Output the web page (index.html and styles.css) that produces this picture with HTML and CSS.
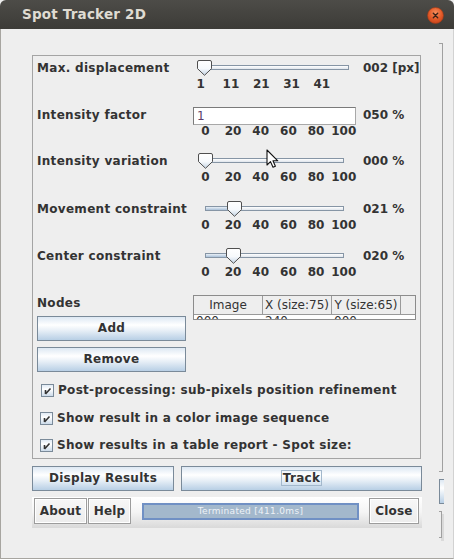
FILE: index.html
```html
<!DOCTYPE html>
<html>
<head>
<meta charset="utf-8">
<title>Spot Tracker 2D</title>
<link rel="stylesheet" href="styles.css">
</head>
<body>
<div class="window">
  <div class="titlebar">
    <span class="title">Spot Tracker 2D</span>
    <svg class="closebtn" width="17" height="17" viewBox="0 0 17 17">
      <defs>
        <radialGradient id="cg" cx="50%" cy="35%" r="65%">
          <stop offset="0" stop-color="#f7905f"/>
          <stop offset="0.6" stop-color="#e45a28"/>
          <stop offset="1" stop-color="#c8451c"/>
        </radialGradient>
      </defs>
      <circle cx="8.5" cy="8.5" r="8" fill="url(#cg)" stroke="#9c3a17" stroke-width="0.6"/>
      <path d="M6.3 6.3 L10.7 10.7 M10.7 6.3 L6.3 10.7" stroke="#3b2218" stroke-width="1.4" stroke-linecap="round"/>
    </svg>
  </div>
  <div class="client">
    <div class="main">
      <div class="panel">
        <div class="row">
          <div class="lbl">Max. displacement</div>
          <div class="ctrl">
            <div class="slider">
              <div class="track tr50"></div>
              <svg class="thumb" style="left:4px" width="15" height="16" viewBox="0 0 15 16"><use href="#thumbshape"/></svg>
            </div>
            <div class="ticks t50"><span>1</span><span>11</span><span>21</span><span>31</span><span>41</span></div>
          </div>
          <div class="val">002 [px]</div>
        </div>

        <div class="row r2">
          <div class="lbl">Intensity factor</div>
          <div class="ctrl">
            <div class="field">1</div>
            <div class="ticks t100 tf"><span>0</span><span>20</span><span>40</span><span>60</span><span>80</span><span>100</span></div>
          </div>
          <div class="val">050 %</div>
        </div>

        <div class="row r3">
          <div class="lbl">Intensity variation</div>
          <div class="ctrl">
            <div class="slider">
              <div class="track tr100"></div>
              <svg class="thumb" style="left:5px" width="15" height="16" viewBox="0 0 15 16"><use href="#thumbshape"/></svg>
            </div>
            <div class="ticks t100"><span>0</span><span>20</span><span>40</span><span>60</span><span>80</span><span>100</span></div>
          </div>
          <div class="val">000 %</div>
        </div>

        <div class="row r4">
          <div class="lbl">Movement constraint</div>
          <div class="ctrl">
            <div class="slider">
              <div class="track tr100"><div class="fill" style="width:30px"></div></div>
              <svg class="thumb" style="left:34px" width="15" height="16" viewBox="0 0 15 16"><use href="#thumbshape"/></svg>
            </div>
            <div class="ticks t100"><span>0</span><span>20</span><span>40</span><span>60</span><span>80</span><span>100</span></div>
          </div>
          <div class="val">021 %</div>
        </div>

        <div class="row r5">
          <div class="lbl">Center constraint</div>
          <div class="ctrl">
            <div class="slider">
              <div class="track tr100"><div class="fill" style="width:28px"></div></div>
              <svg class="thumb" style="left:33px" width="15" height="16" viewBox="0 0 15 16"><use href="#thumbshape"/></svg>
            </div>
            <div class="ticks t100"><span>0</span><span>20</span><span>40</span><span>60</span><span>80</span><span>100</span></div>
          </div>
          <div class="val">020 %</div>
        </div>

        <div class="nodes">
          <div class="nodes-left">
            <div class="lbl">Nodes</div>
            <div class="btn add">Add</div>
            <div class="btn remove">Remove</div>
          </div>
          <div class="table">
            <div class="thead">
              <span>Image</span><span>X (size:75)</span><span>Y (size:65)</span><span class="corner"></span>
            </div>
            <div class="trow">
              <span>000</span><span>240</span><span>000</span><span></span>
            </div>
          </div>
        </div>

        <div class="cb cb1">
          <svg class="box" width="13" height="13" viewBox="0 0 13 13"><use href="#cbshape"/></svg>
          <span>Post-processing: sub-pixels position refinement</span>
        </div>
        <div class="cb cb2">
          <svg class="box" width="13" height="13" viewBox="0 0 13 13"><use href="#cbshape"/></svg>
          <span>Show result in a color image sequence</span>
        </div>
        <div class="cb cb3">
          <svg class="box" width="13" height="13" viewBox="0 0 13 13"><use href="#cbshape"/></svg>
          <span>Show results in a table report - Spot size:</span>
        </div>
      </div>

      <div class="btnrow">
        <div class="btn display">Display Results</div>
        <div class="btn track-btn"><span class="focus">Track</span></div>
      </div>

      <div class="bottom">
        <div class="ebtn about">About</div>
        <div class="ebtn help">Help</div>
        <div class="progress">Terminated [411.0ms]</div>
        <div class="ebtn close">Close</div>
      </div>
    </div>
    <div class="side">
      <div class="brk1"></div>
      <div class="piece"></div>
      <div class="brk2"></div>
    </div>
  </div>

  <svg class="cursor" width="13" height="20" viewBox="0 0 13 20">
    <path d="M1 1 L1 16 L4.5 12.6 L7 18.3 L9.4 17.3 L7 11.8 L11.8 11.8 Z" fill="#ffffff" stroke="#111111" stroke-width="1.1" stroke-linejoin="round"/>
  </svg>

  <svg width="0" height="0" class="defs">
    <defs>
      <linearGradient id="tg" x1="0" y1="0" x2="0" y2="1">
        <stop offset="0" stop-color="#ffffff"/>
        <stop offset="0.55" stop-color="#f6f9fc"/>
        <stop offset="1" stop-color="#c4d4e4"/>
      </linearGradient>
      <g id="thumbshape">
        <path d="M2 0.5 H13 Q14.5 0.5 14.5 2 V8.6 L7.5 15.3 L0.5 8.6 V2 Q0.5 0.5 2 0.5 Z" fill="url(#tg)" stroke="#4f4f4f" stroke-width="1"/>
      </g>
      <linearGradient id="bg" x1="0" y1="0" x2="0" y2="1">
        <stop offset="0" stop-color="#dde8f3"/>
        <stop offset="0.4" stop-color="#ffffff"/>
        <stop offset="1" stop-color="#c8d8e8"/>
      </linearGradient>
      <g id="cbshape">
        <rect x="0.5" y="0.5" width="12" height="12" fill="url(#bg)" stroke="#7a8a99"/>
        <path d="M4.5 6 V10 M4.5 10 L9.5 4.5" stroke="#333333" stroke-width="1.6" fill="none"/>
      </g>
    </defs>
  </svg>
</div>
</body>
</html>
```
FILE: styles.css
```css
* { box-sizing: border-box; }
html, body { margin: 0; padding: 0; background: #eeeeee; }
body {
  width: 454px;
  height: 559px;
  overflow: hidden;
  font-family: "DejaVu Sans", "Liberation Sans", sans-serif;
  font-size: 12px;
  color: #333333;
}
.window {
  position: relative;
  width: 454px;
  height: 559px;
  display: flex;
  flex-direction: column;
  background: #eeeeee;
}
.defs { position: absolute; }

/* title bar */
.titlebar {
  height: 29px;
  flex: none;
  display: flex;
  align-items: center;
  padding-left: 22px;
  background: linear-gradient(#4d4c48, #3c3b37);
  border-radius: 6px 6px 0 0;
}
.title {
  font-weight: bold;
  font-size: 13.5px;
  line-height: 29px;
  color: #dfdbd2;
  letter-spacing: 0.2px;
}
.closebtn {
  margin-left: auto;
  margin-right: 10px;
  margin-top: 2px;
}

/* client */
.client {
  flex: 1;
  display: flex;
  padding-left: 31px;
  border-left: 1px solid #a7a5a0;
  border-right: 1px solid #d2d2d2;
  border-bottom: 1px solid #a7a5a0;
}
.main {
  width: 390px;
  flex: none;
  padding-top: 26px;
  display: flex;
  flex-direction: column;
}
.panel {
  width: 389px;
  height: 404px;
  border: 1px solid #a4a4a4;
  padding: 4px 0 0 4px;
}

/* slider rows */
.row {
  display: grid;
  grid-template-columns: 156px 170px auto;
  align-items: start;
}
.r2 { margin-top: 16px; }
.r3 { margin-top: 15px; }
.r4 { margin-top: 17px; }
.r5 { margin-top: 16px; }
.lbl, .val {
  font-weight: bold;
  line-height: 16px;
  white-space: nowrap;
}
.lbl { letter-spacing: 0.3px; }
.ctrl { display: flex; flex-direction: column; }
.slider {
  position: relative;
  height: 17px;
}
.track {
  margin-top: 5px;
  height: 5px;
  border: 1px solid #8695a5;
  background: linear-gradient(#ffffff, #dfe5ec);
}
.tr50 { margin-left: 8px; width: 148px; }
.tr100 { margin-left: 12px; width: 139px; }
.fill {
  height: 3px;
  background: linear-gradient(#e9f0f7, #a9c0d8);
}
.thumb {
  position: absolute;
  top: 0;
}
.ticks {
  display: grid;
  line-height: 14px;
  font-weight: bold;
  text-align: center;
  white-space: nowrap;
}
.t50 { margin-left: -7.5px; grid-template-columns: repeat(5, 30.3px); }
.t100 { margin-left: -1.5px; grid-template-columns: repeat(6, 27.7px); }
.tf { margin-top: -1px; }
.field {
  width: 163px;
  height: 18px;
  border: 1px solid #8a8a8a;
  border-color: #7a7a7a #a8a8a8 #a8a8a8 #7a7a7a;
  background: #ffffff;
  padding-left: 3px;
  line-height: 16px;
  color: #5b3d6b;
}

/* nodes */
.nodes {
  margin-top: 16px;
  display: grid;
  grid-template-columns: 149px 223px;
  column-gap: 7px;
  align-items: start;
}
.nodes-left { display: flex; flex-direction: column; }
.btn {
  height: 25px;
  border: 1px solid #7a8a99;
  background: linear-gradient(#dde8f3 0%, #ffffff 35%, #e6eef6 60%, #b8cfe5 100%);
  font-weight: bold;
  text-align: center;
  line-height: 23px;
  white-space: nowrap;
  letter-spacing: 0.3px;
}
.add { margin-top: 5px; }
.remove { margin-top: 6px; }
.table {
  width: 223px;
  height: 25px;
  border: 1px solid #8c8c8c;
  background: #ffffff;
  overflow: hidden;
}
.thead, .trow {
  display: grid;
  grid-template-columns: 69px 69px 69px 1fr;
}
.thead {
  height: 19px;
  border-bottom: 1px solid #9a9a9a;
  background: #eeeeee;
}
.thead span {
  border-right: 1px solid #9a9a9a;
  text-align: center;
  line-height: 18px;
  white-space: nowrap;
  overflow: hidden;
}
.thead .corner { border-right: none; }
.trow span {
  padding-left: 2px;
  line-height: 16px;
  margin-top: -2px;
}

/* checkboxes */
.cb {
  display: flex;
  align-items: center;
  height: 16px;
  font-weight: bold;
  white-space: nowrap;
  margin-left: 3px;
  letter-spacing: 0.3px;
}
.cb .box { flex: none; margin-right: 4px; }
.cb1 { margin-top: 10px; margin-left: 4px; }
.cb2 { margin-top: 12px; }
.cb3 { margin-top: 11px; }

/* button rows */
.btnrow {
  margin-top: 7px;
  display: flex;
  gap: 7px;
}
.display { width: 142px; }
.track-btn { flex: 1; }
.focus {
  display: inline-block;
  border: 1px solid #a3b8cc;
  line-height: 14px;
  padding: 0 1px;
  vertical-align: middle;
  margin-top: -2px;
}
.bottom {
  margin-top: 6px;
  height: 31px;
  display: flex;
  align-items: flex-start;
  padding: 1px 3px 0 2px;
  background: linear-gradient(#ffffff 0%, #f4f4f4 50%, #d9d9d9 100%);
}
.ebtn {
  height: 26px;
  border: 1px solid #9c9c9c;
  box-shadow: inset 0 0 0 1px #ffffff;
  background: linear-gradient(#f7f7f7, #ececec);
  font-weight: bold;
  line-height: 24px;
  text-align: center;
  letter-spacing: 0.2px;
}
.about { width: 53px; }
.help { width: 43px; margin-left: 1px; }
.progress {
  width: 217px;
  height: 17px;
  margin-left: 11px;
  margin-top: 5px;
  border: 2px solid #7090c4;
  background: #a3b8cc;
  color: #eef2f7;
  font-size: 9px;
  line-height: 13px;
  text-align: center;
  letter-spacing: 0.3px;
  white-space: nowrap;
}
.close { width: 50px; margin-left: 10px; }

/* right-hand fragments */
.side {
  flex: 1;
  display: flex;
  flex-direction: column;
  padding-left: 17px;
}
.brk1 {
  margin-top: 14px;
  width: 4px;
  height: 429px;
  border: 1px solid #a0a0a0;
  border-left: none;
}
.piece {
  margin-top: 7px;
  width: 5px;
  height: 25px;
  border: 1px solid #7a8a99;
  border-right: none;
  background: linear-gradient(#dde8f3, #ffffff 35%, #b8cfe5);
}
.brk2 {
  margin-top: 7px;
  width: 3px;
  height: 27px;
  border: 1px solid #a0a0a0;
  border-left: none;
  box-shadow: 2px 3px 0 #dadada;
}

/* mouse pointer overlay */
.cursor {
  position: absolute;
  left: 266px;
  top: 149px;
}
```
